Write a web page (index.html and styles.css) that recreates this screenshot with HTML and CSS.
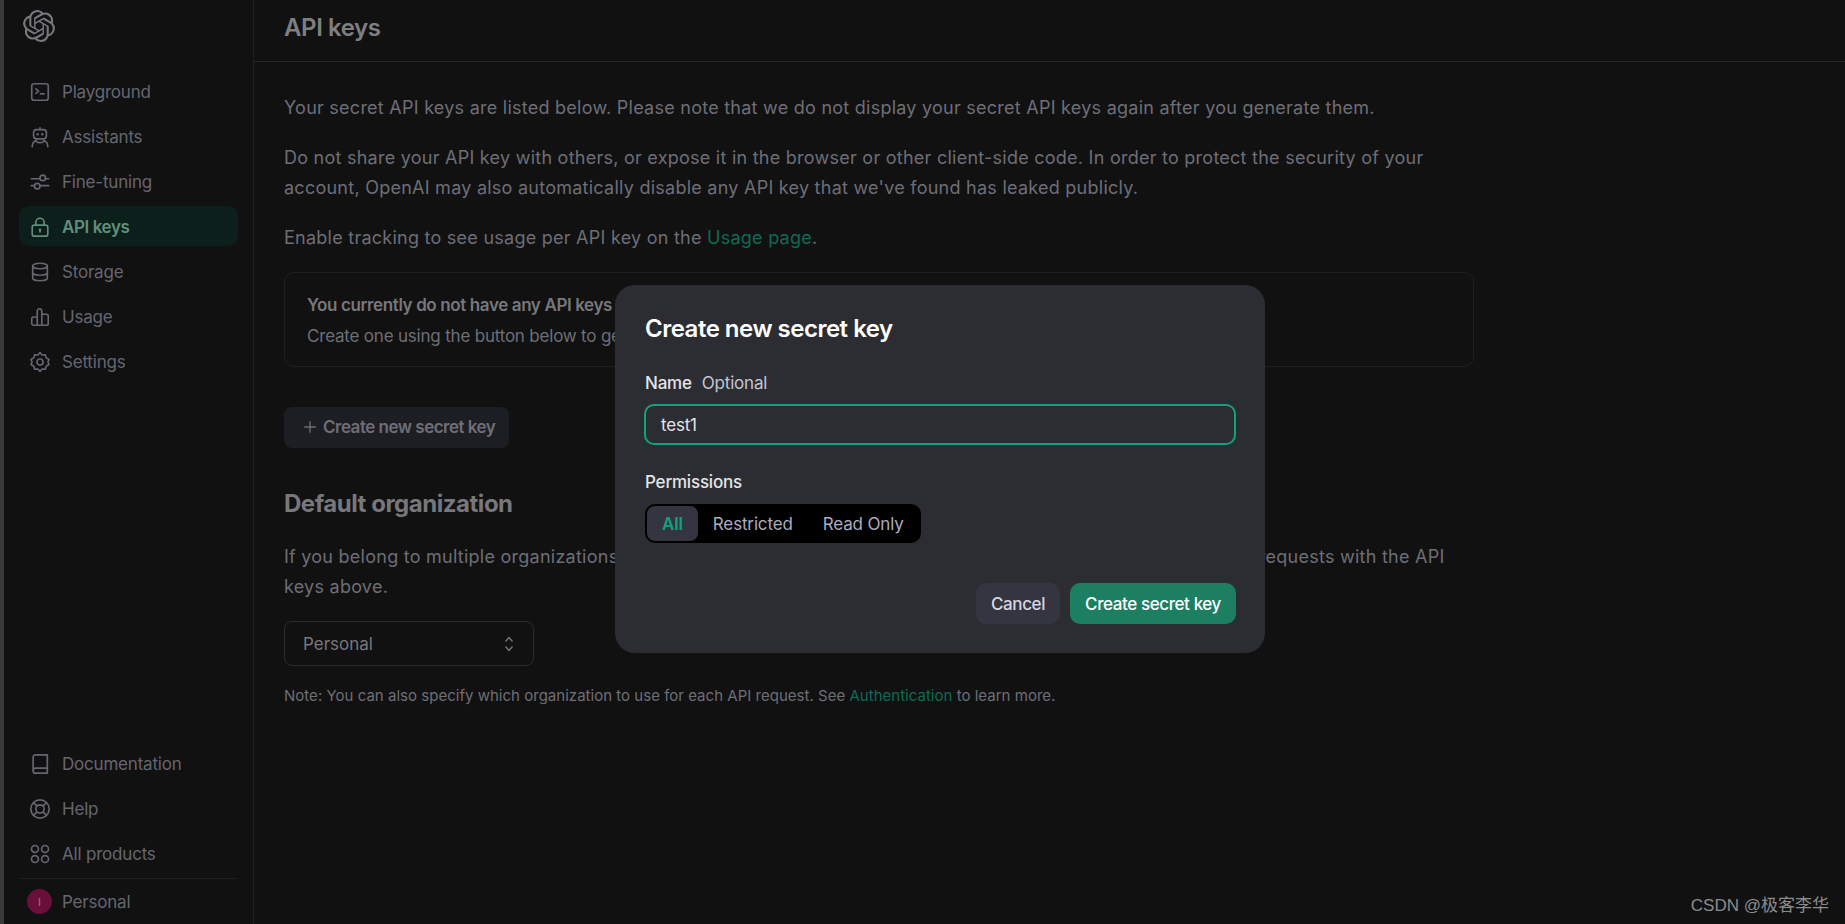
FILE: index.html
```html
<!DOCTYPE html>
<html lang="en">
<head>
    <meta charset="UTF-8">
    <meta name="viewport" content="width=device-width, initial-scale=1.0">
    <title>API keys</title>
    <link rel="stylesheet" href="styles.css">
</head>
<body>
    <div class="app">
        <aside class="sidebar">
            <div class="logo">
                <svg viewBox="0 0 24 24" width="32" height="32"><path fill="currentColor" d="M22.2819 9.8211a5.9847 5.9847 0 0 0-.5157-4.9108 6.0462 6.0462 0 0 0-6.5098-2.9A6.0651 6.0651 0 0 0 4.9807 4.1818a5.9847 5.9847 0 0 0-3.9977 2.9 6.0462 6.0462 0 0 0 .7427 7.0966 5.98 5.98 0 0 0 .511 4.9107 6.051 6.051 0 0 0 6.5146 2.9001A5.9847 5.9847 0 0 0 13.2599 24a6.0557 6.0557 0 0 0 5.7718-4.2058 5.9894 5.9894 0 0 0 3.9977-2.9001 6.0557 6.0557 0 0 0-.7475-7.0729zm-9.022 12.6081a4.4755 4.4755 0 0 1-2.8764-1.0408l.1419-.0804 4.7783-2.7582a.7948.7948 0 0 0 .3927-.6813v-6.7369l2.02 1.1686a.071.071 0 0 1 .038.052v5.5826a4.504 4.504 0 0 1-4.4945 4.4944zm-9.6607-4.1254a4.4708 4.4708 0 0 1-.5346-3.0137l.142.0852 4.783 2.7582a.7712.7712 0 0 0 .7806 0l5.8428-3.3685v2.3324a.0804.0804 0 0 1-.0332.0615L9.74 19.9502a4.4992 4.4992 0 0 1-6.1408-1.6464zM2.3408 7.8956a4.485 4.485 0 0 1 2.3655-1.9728V11.6a.7664.7664 0 0 0 .3879.6765l5.8144 3.3543-2.0201 1.1685a.0757.0757 0 0 1-.071 0l-4.8303-2.7865A4.504 4.504 0 0 1 2.3408 7.872zm16.5963 3.8558L13.1038 8.364 15.1192 7.2a.0757.0757 0 0 1 .071 0l4.8303 2.7913a4.4944 4.4944 0 0 1-.6765 8.1042v-5.6772a.79.79 0 0 0-.407-.667zm2.0107-3.0231l-.142-.0852-4.7735-2.7818a.7759.7759 0 0 0-.7854 0L9.409 9.2297V6.8974a.0662.0662 0 0 1 .0284-.0615l4.8303-2.7866a4.4992 4.4992 0 0 1 6.6802 4.66zM8.3065 12.863l-2.02-1.1638a.0804.0804 0 0 1-.038-.0567V6.0742a4.4992 4.4992 0 0 1 7.3757-3.4537l-.142.0805L8.704 5.459a.7948.7948 0 0 0-.3927.6813zm1.0976-2.3654l2.602-1.4998 2.6069 1.4998v2.9994l-2.5974 1.4997-2.6067-1.4997Z"/></svg>
            </div>
            <nav class="nav">
                <a class="nav-item"><svg class="icon" viewBox="0 0 24 24"><rect x="3" y="3" width="18" height="18" rx="2.5"/><path d="M7.5 8.5l3 2.5-3 2.5M12.5 14h4"/></svg>Playground</a>
                <a class="nav-item"><svg class="icon" viewBox="0 0 24 24"><rect x="5" y="4" width="14" height="10" rx="3.5"/><path d="M12 4V2"/><circle class="dot" cx="9.5" cy="9" r="1.3"/><circle class="dot" cx="14.5" cy="9" r="1.3"/><path d="M3.5 22.5c0-3.500 2-6 4.500-7M20.500 22.500c0-3.500-2-6-4.500-7M8 17c2.500 1.500 5.500 1.500 8 0"/></svg>Assistants</a>
                <a class="nav-item"><svg class="icon" viewBox="0 0 24 24"><path d="M2.500 8.500h9M18.500 8.500h3M2.500 16H6M12 16h9.500"/><circle cx="15" cy="7.500" r="3"/><circle cx="9" cy="16.500" r="3"/></svg>Fine-tuning</a>
                <a class="nav-item active"><svg class="icon" viewBox="0 0 24 24"><rect x="3.500" y="10" width="17" height="12" rx="2.500"/><path d="M7.500 10V7a4.500 4.500 0 0 1 9 0v3M12 15.500v2"/><circle class="dot" cx="12" cy="15" r="1.300"/></svg>API keys</a>
                <a class="nav-item"><svg class="icon" viewBox="0 0 24 24"><ellipse cx="12" cy="5.500" rx="8" ry="3"/><path d="M4 5.500v13c0 1.700 3.600 3 8 3s8-1.300 8-3v-13M4 12.500c0 1.700 3.600 3 8 3s8-1.300 8-3"/></svg>Storage</a>
                <a class="nav-item"><svg class="icon" viewBox="0 0 24 24"><path d="M9 21V5.500a2.500 2.500 0 0 1 3-2.400 2.500 2.500 0 0 1 2 2.400V21M9 21H5a2 2 0 0 1-2-2v-5a2 2 0 0 1 2-2h4M14 21h5a2 2 0 0 0 2-2v-8a2 2 0 0 0-2-2h-5M5 21h14"/></svg>Usage</a>
                <a class="nav-item"><svg class="icon" viewBox="0 0 24 24"><path d="M12 1.800l2.300 2.600 3.500-.3 1 3.400 3 1.700-1.100 2.800 1.100 2.800-3 1.700-1 3.400-3.500-.3-2.300 2.600-2.300-2.600-3.500.3-1-3.400-3-1.700 1.100-2.800-1.100-2.800 3-1.700 1-3.400 3.500.3z"/><circle cx="12" cy="12" r="3.300"/></svg>Settings</a>
            </nav>
            <nav class="nav nav-bottom">
                <a class="nav-item"><svg class="icon" viewBox="0 0 24 24"><path d="M4.500 19V4.500A2.500 2.500 0 0 1 7 2h13v20H7a2.500 2.500 0 0 1-2.500-2.500V19A2.500 2.500 0 0 1 7 16.500h13"/></svg>Documentation</a>
                <a class="nav-item"><svg class="icon" viewBox="0 0 24 24"><circle cx="12" cy="12" r="10"/><circle cx="12" cy="12" r="4.500"/><path d="M5 5l3.800 3.800M19 5l-3.800 3.800M5 19l3.800-3.800M19 19l-3.800-3.800"/></svg>Help</a>
                <a class="nav-item"><svg class="icon" viewBox="0 0 24 24"><circle cx="6.500" cy="6.500" r="3.800"/><circle cx="17.500" cy="6.500" r="3.800"/><circle cx="6.500" cy="17.500" r="3.800"/><circle cx="17.500" cy="17.500" r="3.800"/></svg>All products</a>
                <div class="account">
                    <span class="avatar">I</span>Personal
                </div>
            </nav>
        </aside>

        <div class="main">
            <header class="topbar">
                <h1>API keys</h1>
            </header>
            <div class="content">
                <p>Your secret API keys are listed below. Please note that we do not display your secret API keys again after you generate them.</p>
                <p>Do not share your API key with others, or expose it in the browser or other client-side code. In order to protect the security of your account, OpenAI may also automatically disable any API key that we've found has leaked publicly.</p>
                <p>Enable tracking to see usage per API key on the <a class="link">Usage page</a>.</p>

                <div class="empty-box">
                    <strong>You currently do not have any API keys</strong>
                    <span>Create one using the button below to get started</span>
                </div>

                <button class="create-btn">
                    <svg class="plus" viewBox="0 0 16 16"><path d="M8 1.500v13M1.500 8h13"/></svg>
                    Create new secret key
                </button>

                <h2>Default organization</h2>
                <p>If you belong to multiple organizations, this setting controls which organization is used by default when making requests with the API keys above.</p>

                <div class="org-select">
                    Personal
                    <svg class="updown" viewBox="0 0 12 20"><path d="M2.500 7.500L6 3.500l3.500 4M2.500 12.500l3.500 4 3.500-4"/></svg>
                </div>

                <p class="note">Note: You can also specify which organization to use for each API request. See <a class="link">Authentication</a> to learn more.</p>
            </div>
        </div>
    </div>

    <div class="modal">
        <h3>Create new secret key</h3>
        <div class="field-label"><b>Name</b><span>Optional</span></div>
        <div class="text-input">test1</div>
        <div class="field-label perms"><b>Permissions</b></div>
        <div class="segments">
            <span class="segment selected">All</span>
            <span class="segment">Restricted</span>
            <span class="segment">Read Only</span>
        </div>
        <div class="modal-actions">
            <button class="btn btn-cancel">Cancel</button>
            <button class="btn btn-primary">Create secret key</button>
        </div>
    </div>

    <div class="watermark">CSDN @极客李华</div>
</body>
</html>
```

FILE: styles.css
```css
* {
    box-sizing: border-box;
}

body {
    margin: 0;
    height: 924px;
    overflow: hidden;
    background: #111112;
    color: #6e6e76;
    font-family: Inter, 'Noto Sans', sans-serif;
    font-size: 17px;
}

.app {
    display: flex;
    height: 924px;
    border-left: 4px solid #3a3a3a;
}

/* Sidebar */
.sidebar {
    width: 250px;
    flex-shrink: 0;
    display: flex;
    flex-direction: column;
    padding: 0 15px;
    border-right: 1px solid #1f1f22;
}

.logo {
    height: 71px;
    padding: 10px 0 0 4px;
    color: #77777c;
}

.nav {
    display: flex;
    flex-direction: column;
    gap: 5px;
}

.nav-bottom {
    margin-top: auto;
}

.nav-item {
    display: flex;
    align-items: center;
    gap: 11px;
    height: 40px;
    padding: 1px 0 0 10px;
    border-radius: 10px;
    color: #66666f;
    letter-spacing: -0.2px;
}

.nav-bottom .nav-item {
    padding-top: 0;
}

.nav-item.active {
    background: #0d1f1a;
    color: #5f8f7c;
    font-weight: 600;
    letter-spacing: -0.4px;
}

.icon {
    width: 22px;
    height: 22px;
    flex-shrink: 0;
    fill: none;
    stroke: currentColor;
    stroke-width: 1.8;
    stroke-linecap: round;
    stroke-linejoin: round;
}

.icon .dot {
    fill: currentColor;
    stroke: none;
}

.account {
    display: flex;
    align-items: center;
    gap: 10px;
    height: 46px;
    margin-top: -1px;
    padding-left: 8px;
    border-top: 1px solid #1d1d22;
    color: #66666f;
    letter-spacing: -0.2px;
}

.avatar {
    width: 25px;
    height: 25px;
    border-radius: 50%;
    background: #6a0f3a;
    color: #a0708a;
    font-size: 11px;
    display: flex;
    align-items: center;
    justify-content: center;
}

/* Main column */
.main {
    flex: 1;
    min-width: 0;
}

.topbar {
    height: 62px;
    padding: 0 30px;
    display: flex;
    align-items: center;
    border-bottom: 1px solid #26262a;
}

.topbar h1 {
    margin: -7px 0 0;
    font-size: 24px;
    font-weight: 600;
    letter-spacing: -0.4px;
    color: #7f7f82;
}

.content {
    width: 1250px;
    padding: 31px 30px 0;
}

.content p {
    margin: 0 0 20px;
    font-size: 18px;
    line-height: 30px;
    letter-spacing: 0.25px;
}

.link {
    color: #0e6b52;
}

.empty-box {
    height: 95px;
    margin-top: -1px;
    padding: 22px 22px 0;
    display: flex;
    flex-direction: column;
    gap: 10px;
    border: 1px solid #1f1f23;
    border-radius: 10px;
    line-height: 21px;
    letter-spacing: -0.2px;
}

.empty-box strong {
    font-weight: 600;
    letter-spacing: -0.38px;
    color: #77777c;
}

.create-btn {
    display: flex;
    align-items: center;
    gap: 6px;
    height: 41px;
    margin-top: 40px;
    padding: 0 14px 2px 19px;
    border: 0;
    border-radius: 8px;
    background: #1d1e23;
    color: #6e6e76;
    font: 600 17px Inter, sans-serif;
    letter-spacing: -0.5px;
}

.plus {
    width: 14px;
    height: 14px;
    fill: none;
    stroke: currentColor;
    stroke-width: 1.5;
}

.content h2 {
    margin: 40px 0 22px;
    font-size: 24px;
    line-height: 32px;
    font-weight: 700;
    letter-spacing: -0.47px;
    color: #77777c;
}

.org-select {
    width: 250px;
    height: 45px;
    margin-top: -1px;
    padding: 0 18px;
    display: flex;
    align-items: center;
    justify-content: space-between;
    border: 1px solid #2b2b31;
    border-radius: 8px;
    color: #77777c;
}

.updown {
    width: 12px;
    height: 20px;
    fill: none;
    stroke: currentColor;
    stroke-width: 1.300;
}

.content .note {
    margin: 15px 0 0;
    font-size: 15px;
    line-height: 30px;
    letter-spacing: 0.02px;
}

/* Dialog */
.modal {
    position: absolute;
    left: 615px;
    top: 285px;
    width: 650px;
    height: 368px;
    padding: 30px 29px 0;
    border-radius: 20px;
    background: #2c2d33;
    color: #e4e4e8;
}

.modal h3 {
    margin: 0 0 0 1px;
    height: 28px;
    line-height: 28px;
    font-size: 24px;
    font-weight: 600;
    letter-spacing: -0.5px;
    color: #fff;
}

.field-label {
    display: flex;
    gap: 10px;
    margin: 29px 0 0 1px;
    height: 22px;
    line-height: 22px;
    letter-spacing: -0.2px;
}

.field-label b {
    font-weight: 500;
}

.field-label span {
    color: #c5c5d2;
}

.text-input {
    height: 41px;
    margin-top: 10px;
    padding-left: 15px;
    display: flex;
    align-items: center;
    border: 2px solid #10a37f;
    border-radius: 10px;
    background: #2c2d33;
    letter-spacing: -0.2px;
}

.field-label.perms {
    margin-top: 26px;
}

.segments {
    display: inline-flex;
    align-items: center;
    height: 39px;
    margin: 11px 0 0 1px;
    padding: 2px;
    border-radius: 10px;
    background: #000;
    color: #acacbe;
    letter-spacing: -0.15px;
}

.segment {
    height: 35px;
    padding: 1px 15px 0;
    display: flex;
    align-items: center;
    border-radius: 8px;
}

.segment.selected {
    background: #343541;
    color: #10a37f;
    font-weight: 600;
}

.modal-actions {
    display: flex;
    justify-content: flex-end;
    gap: 10px;
    margin-top: 40px;
}

.btn {
    height: 41px;
    padding: 0 15px;
    border: 0;
    border-radius: 10px;
    font: 500 17px Inter, sans-serif;
    letter-spacing: -0.4px;
}

.btn-cancel {
    background: #343541;
    color: #d6d6e0;
}

.btn-primary {
    background: #1c7f62;
    color: #fff;
}

.watermark {
    position: absolute;
    right: 16px;
    bottom: 8px;
    font-family: 'Liberation Sans', 'Noto Sans CJK SC', sans-serif;
    font-size: 17px;
    color: #8c8c8c;
}
```
